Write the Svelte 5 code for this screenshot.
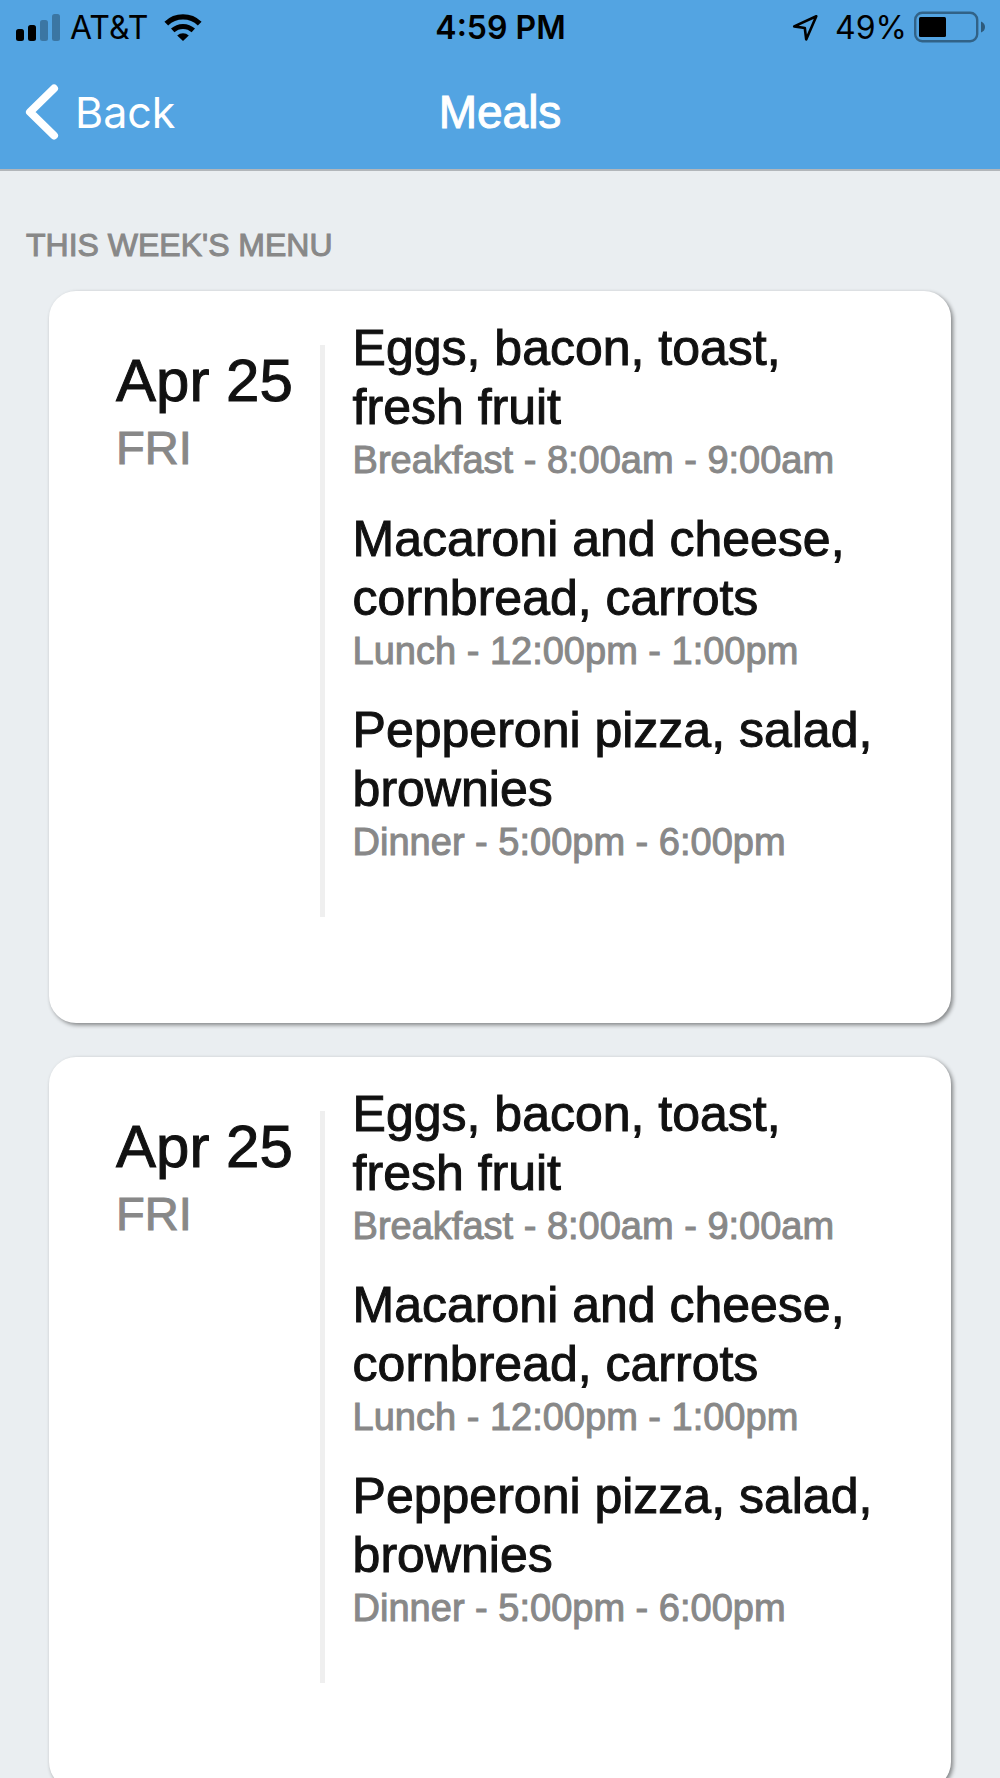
<script lang="ts">
	interface Meal {
		menu: string;
		name: string;
		start: string;
		end: string;
	}

	interface Day {
		id: number;
		date: string;
		weekday: string;
		meals: Meal[];
	}

	const meals: Meal[] = [
		{ menu: 'Eggs, bacon, toast, fresh fruit', name: 'Breakfast', start: '8:00am', end: '9:00am' },
		{ menu: 'Macaroni and cheese, cornbread, carrots', name: 'Lunch', start: '12:00pm', end: '1:00pm' },
		{ menu: 'Pepperoni pizza, salad, brownies', name: 'Dinner', start: '5:00pm', end: '6:00pm' }
	];

	let days: Day[] = $state([
		{ id: 1, date: 'Apr 25', weekday: 'FRI', meals },
		{ id: 2, date: 'Apr 25', weekday: 'FRI', meals }
	]);

	function goBack() {
		history.back();
	}
</script>

<div class="screen">
	<header class="top">
		<div class="status-bar">
			<div class="status-left">
				<svg class="signal" width="44" height="27" viewBox="0 0 44 27">
					<rect x="0" y="15" width="8" height="12" rx="2.5" />
					<rect x="12" y="11" width="8" height="16" rx="2.5" />
					<rect x="24" y="6" width="8" height="21" rx="2.5" opacity="0.28" />
					<rect x="36" y="0" width="8" height="27" rx="2.5" opacity="0.28" />
				</svg>
				<span>AT&amp;T</span>
				<svg class="wifi" width="38" height="27" viewBox="0 0 38 27">
					<path d="M2.3 9.6a24.2 24.2 0 0 1 33.4 0" fill="none" stroke="#000" stroke-width="5.4" />
					<path d="M8.7 16.4a15.2 15.2 0 0 1 20.6 0" fill="none" stroke="#000" stroke-width="5" />
					<path d="M19 27l-5.8-5.6a8.6 8.6 0 0 1 11.6 0z" />
				</svg>
			</div>
			<span class="clock">4:59 PM</span>
			<div class="status-right">
				<svg class="location" width="27" height="27" viewBox="0 0 27 27">
					<path d="M24.3 2.2L2.2 12.4l10.6 1.6 1.4 11.4z" fill="none" stroke="#000" stroke-width="2.6" stroke-linejoin="round" />
				</svg>
				<span>49%</span>
				<svg class="battery" width="71" height="32" viewBox="0 0 71 32">
					<rect x="1.2" y="1.8" width="62" height="28.4" rx="7" fill="none" stroke="#000" stroke-width="2.4" opacity="0.4" />
					<rect x="5" y="6" width="27" height="20" rx="1.5" />
					<path d="M67 10.500q4 1.500 4 5.500t-4 5.500z" opacity="0.45" />
				</svg>
			</div>
		</div>
		<nav class="nav-bar">
			<button class="back" onclick={goBack}>
				<svg width="34" height="56" viewBox="0 0 34 56">
					<path d="M29 4.500L5 28 29 51.500" fill="none" stroke="#fff" stroke-width="8" stroke-linecap="round" stroke-linejoin="round" />
				</svg>
				<span>Back</span>
			</button>
			<h1>Meals</h1>
		</nav>
	</header>

	<main>
		<h2>THIS WEEK'S MENU</h2>
		<div class="days">
			{#each days as day (day.id)}
				<section class="card">
					<div class="date">
						<div class="day">{day.date}</div>
						<div class="weekday">{day.weekday}</div>
					</div>
					<div class="divider"></div>
					<ul class="meals">
						{#each day.meals as meal}
							<li>
								<h3>{meal.menu}</h3>
								<p>{meal.name} - {meal.start} - {meal.end}</p>
							</li>
						{/each}
					</ul>
				</section>
			{/each}
		</div>
	</main>
</div>

<style>
	:global(body) {
		margin: 0;
		background: #eaeef1;
	}
	.screen {
		display: flex;
		flex-direction: column;
		height: 100vh;
		font-family: 'Liberation Sans', Arial, sans-serif;
		color: #111;
	}
	h1, h2, h3, p, ul {
		margin: 0;
		padding: 0;
		font-weight: 400;
	}

	.top {
		flex: none;
		background: #53a4e2;
		border-bottom: 2px solid #b2b6ba;
	}
	.status-bar {
		display: grid;
		grid-template-columns: 1fr auto 1fr;
		align-items: center;
		height: 54px;
		padding: 0 15px 0 16px;
		font-family: Inter, sans-serif;
		font-size: 32px;
		color: #000;
	}
	.status-left,
	.status-right {
		display: flex;
		align-items: center;
	}
	.status-right {
		justify-content: flex-end;
	}
	.signal {
		margin-right: 10px;
	}
	.wifi {
		margin-left: 16px;
	}
	.clock {
		font-weight: 600;
	}
	.location {
		margin-right: 16px;
	}
	.battery {
		margin-left: 7px;
	}

	.nav-bar {
		display: grid;
		grid-template-columns: 1fr auto 1fr;
		align-items: center;
		height: 115px;
		padding: 0 25px;
		color: #fff;
	}
	.back {
		display: flex;
		align-items: center;
		justify-self: start;
		gap: 16px;
		padding: 0;
		border: 0;
		background: none;
		color: inherit;
		font-family: Inter, sans-serif;
		font-size: 43px;
		cursor: pointer;
	}
	h1 {
		font-size: 46px;
		-webkit-text-stroke: 1px currentColor;
	}

	main {
		flex: 1;
		min-height: 0;
		overflow-y: auto;
		scrollbar-width: none;
		padding-top: 54px;
	}
	h2 {
		padding: 0 26px;
		font-size: 32px;
		line-height: 40px;
		color: #888;
		-webkit-text-stroke: 1px currentColor;
	}
	.days {
		display: flex;
		flex-direction: column;
		gap: 34px;
		padding: 26px 49px 34px;
	}
	.card {
		display: flex;
		padding-bottom: 106px;
		border-radius: 27px;
		background: #fff;
		box-shadow: 2px 2px 4px rgba(0, 0, 0, 0.45);
	}
	.date {
		flex: 0 0 30%;
		box-sizing: border-box;
		padding: 56px 0 0 67px;
		-webkit-text-stroke: 1px currentColor;
	}
	.day {
		font-size: 60px;
		line-height: 68px;
	}
	.weekday {
		font-size: 47px;
		line-height: 66px;
		color: #888;
	}
	.divider {
		flex: none;
		width: 5px;
		margin-top: 54px;
		background: #efefef;
	}
	.meals {
		display: flex;
		flex: 1;
		flex-direction: column;
		gap: 27px;
		padding: 28px 60px 52px 28px;
		list-style: none;
		-webkit-text-stroke: 1px currentColor;
	}
	h3 {
		font-size: 50px;
		line-height: 59px;
	}
	p {
		font-size: 38px;
		line-height: 46px;
		color: #888;
	}
</style>
